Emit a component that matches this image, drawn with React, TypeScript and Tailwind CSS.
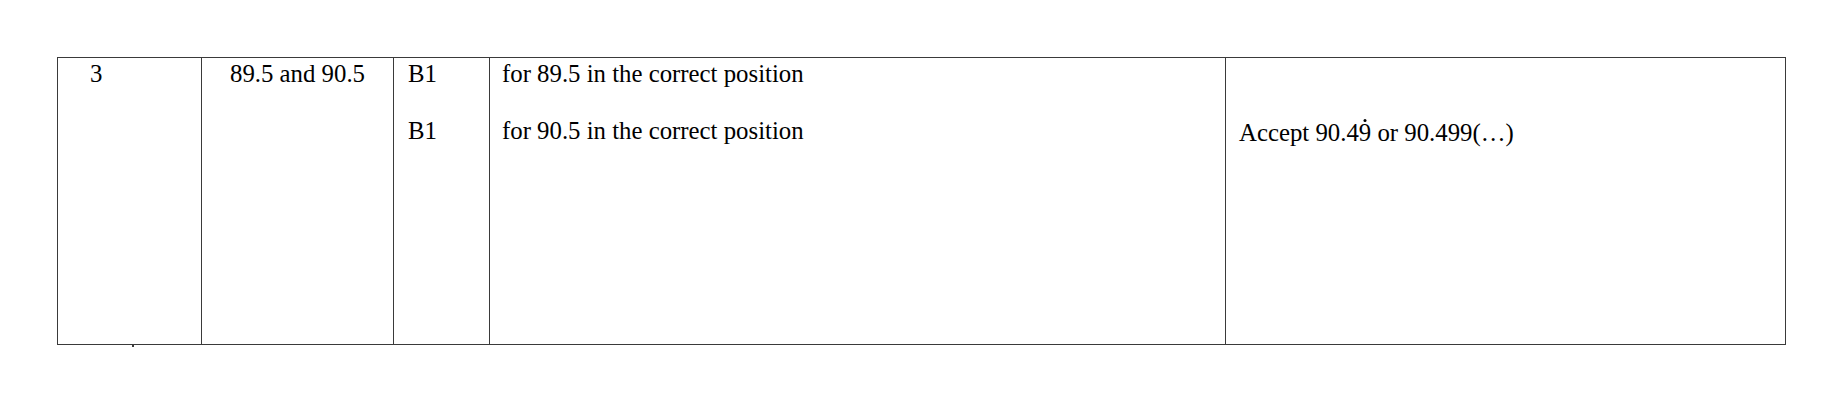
import React from "react";

export default function App() {
  return (
    <div className="w-[1843px] h-[403px] bg-white overflow-hidden pt-[57px] pl-[57px] text-black" style={{ fontFamily: '"Liberation Serif", "Times New Roman", serif' }}>
      <div className="relative w-[1729px] h-[288px] border border-[#3a3a3a] grid grid-cols-[144px_192px_96px_736px_559px] text-[24.8px] leading-[28px]">
        <div className="border-r border-[#3a3a3a] pl-[32px] pt-[2px]">3</div>
        <div className="border-r border-[#3a3a3a] pt-[2px] text-center">89.5 and 90.5</div>
        <div className="border-r border-[#3a3a3a] pl-[14px] pt-[2px] flex flex-col gap-[29px]">
          <span>B1</span>
          <span>B1</span>
        </div>
        <div className="border-r border-[#3a3a3a] pl-[12px] pt-[2px] flex flex-col gap-[29px]">
          <span>for 89.5 in the correct position</span>
          <span>for 90.5 in the correct position</span>
        </div>
        <div className="pl-[13px] pt-[61px]">
          Accept 90.4
          <span className="relative inline-block">
            9
            <span className="absolute left-1/2 top-[0px] -translate-x-1/2 w-[3px] h-[3px] rounded-full bg-black" />
          </span>{" "}
          or 90.499(…)
        </div>
        <div className="absolute left-[74px] bottom-[-3px] w-[2px] h-[2px] bg-[#3a3a3a]" />
      </div>
    </div>
  );
}
